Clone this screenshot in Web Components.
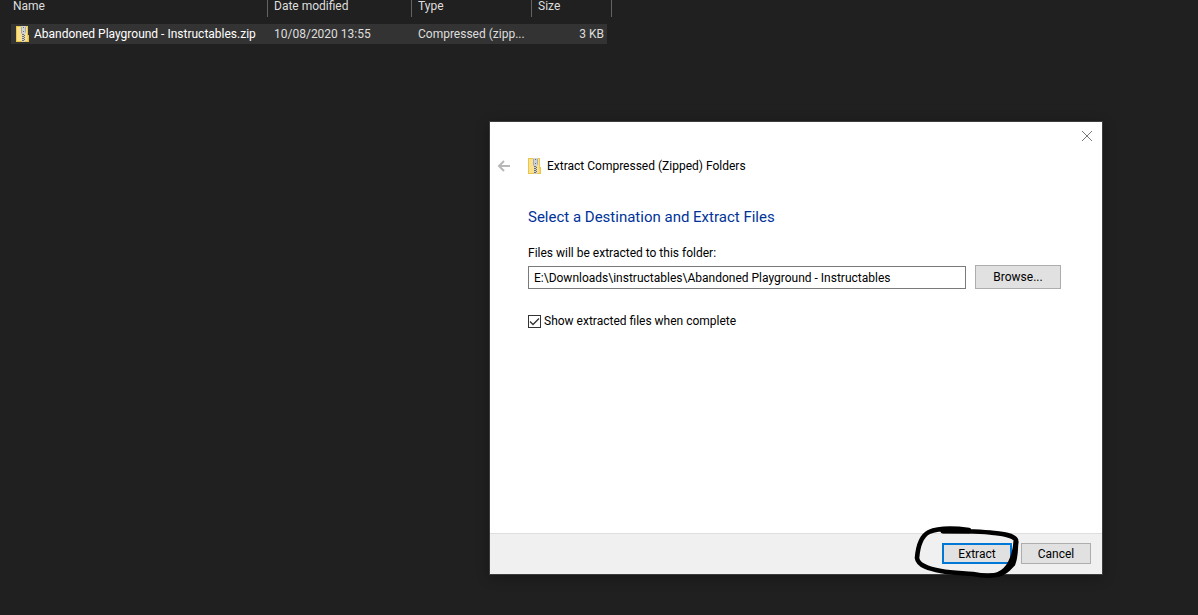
<!DOCTYPE html>
<html lang="en">
<head>
<meta charset="utf-8">
<title>Extract Compressed (Zipped) Folders</title>
<style>
html, body { height: 100%; margin: 0; }
body { background: #202020; color: #fff; font: 12px/16px Roboto, "Noto Sans", sans-serif; overflow: hidden; }
</style>
</head>
<body>
<desktop-area>
  <file-list></file-list>
  <extract-dialog slot="window"></extract-dialog>
</desktop-area>

<template id="zip-icon">
  <style>
    :host { display: block; flex: none; width: 13px; height: 16px; }
    svg { display: block; }
  </style>
  <svg width="13" height="16" viewBox="0 0 13 16" aria-hidden="true">
    <path d="M0 0h12v9h1v7H0z" fill="#e9c548"/>
    <path d="M1 1h10v14H1z" fill="#fbe18d"/>
    <path d="M11 10h1v5h-1z" fill="#f6d365"/>
    <path d="M5 0h5v7l-1 1v8H6V8L5 7z" fill="#d0d3d6"/>
    <path d="M5 1v6l1 1V1zM9 1v6l1-1V1z" fill="#a3a9ae"/>
    <path d="M7 1h1v1H7zM7 5h1v1H7zM6 8h2v1H6zM8 9h1v1H8zM6 10h2v1H6zM8 11h1v1H8zM6 12h2v1H6zM8 13h1v1H8zM6 14h2v1H6z" fill="#6a6e72"/>
  </svg>
</template>

<template id="desktop-area">
  <style>
    :host { display: block; position: relative; min-height: 100%; padding: 0 11px; box-sizing: border-box; }
    ::slotted([slot="window"]) { position: absolute; top: 121px; right: 95px; }
  </style>
  <slot></slot>
  <slot name="window"></slot>
</template>

<template id="file-list">
  <style>
    :host { display: block; }
    table { width: 601px; border-collapse: separate; border-spacing: 0; table-layout: fixed; }
    th, td { padding: 0 6px; text-align: left; white-space: nowrap; box-sizing: border-box; }
    th { height: 17px; padding-bottom: 5px; line-height: 12px; font-weight: 400; color: #dedede; border-right: 1px solid #636363; }
    th:first-child { padding-left: 2px; }
    .gap td { height: 7px; }
    .file td { height: 20px; background: #333; color: #dedede; }
    .file td:first-child { padding-left: 5px; color: #fff; }
    .file td:last-child { text-align: right; padding-right: 3px; border-right: 5px solid #202020; }
    .name { display: flex; align-items: center; gap: 5px; }
    .c1 { width: 257px; } .c2 { width: 144px; } .c3 { width: 120px; } .c4 { width: 80px; }
  </style>
  <table>
    <colgroup><col class="c1"><col class="c2"><col class="c3"><col class="c4"></colgroup>
    <thead><tr><th>Name</th><th>Date modified</th><th>Type</th><th>Size</th></tr></thead>
    <tbody>
      <tr class="gap"><td colspan="4"></td></tr>
      <tr class="file">
        <td><span class="name"><zip-icon></zip-icon>Abandoned Playground - Instructables.zip</span></td>
        <td>10/08/2020 13:55</td><td>Compressed (zipp...</td><td>3 KB</td>
      </tr>
    </tbody>
  </table>
</template>

<template id="push-button">
  <style>
    :host { display: block; flex: none; width: 70px; height: 21px; }
    :host([wide]) { width: 86px; height: 24px; }
    button { width: 100%; height: 100%; padding: 0; box-sizing: border-box; border: 1px solid #adadad; background: #e1e1e1; color: #000; font: inherit; line-height: 16px; }
    :host([primary]) button { border: 2px solid #0078d7; }
  </style>
  <button type="button"><slot></slot></button>
</template>

<template id="pen-ring">
  <style>
    :host { display: block; pointer-events: none; }
    svg { display: block; overflow: visible; }
  </style>
  <svg width="106" height="54" viewBox="0 0 106 54" fill="none" stroke="#000" stroke-linecap="round" stroke-linejoin="round" aria-hidden="true">
    <path d="M54 4C38 2 23 2 14 6C6 10 3 20 2 32C3 40 15 43 26 45C37 47 47 47 58 48C68 50 78 50 85 48C92 46 94 42 98 38C101 31 101 23 101 14C98 9 88 8 79 7C64 5 45 5 28 5" stroke-width="4.600"/>
    <path d="M28 5H54M84 48C93 44 99 34 101 16" stroke-width="5"/>
  </svg>
</template>

<template id="extract-dialog">
  <style>
    :host { display: flex; flex-direction: column; width: 614px; min-height: 454px; box-sizing: border-box; border: 1px solid #3d3d3d; background: #fff; color: #000; box-shadow: 0 3px 12px rgba(0,0,0,.3); }
    header { display: flex; justify-content: flex-end; height: 28px; }
    .plain { display: flex; align-items: center; justify-content: center; border: 0; padding: 0; background: none; }
    .close { width: 30px; height: 28px; }
    nav { display: flex; align-items: center; height: 32px; padding-left: 7px; }
    .back { width: 14px; height: 16px; margin-right: 17px; }
    .title { margin-left: 6px; line-height: 18px; }
    main { flex: 1; padding: 23px 41px 0 38px; }
    h1 { margin: 0 0 16px; font-size: 15px; line-height: 24px; font-weight: 400; color: #003399; }
    .caption { display: block; margin-bottom: 4px; }
    .row { display: flex; align-items: flex-end; gap: 9px; margin-bottom: 24px; }
    .path { flex: 1; min-width: 0; height: 23px; box-sizing: border-box; border: 1px solid #7a7a7a; padding: 0 5px; background: #fff; color: #000; font: inherit; border-radius: 0; }
    .check { display: flex; align-items: center; gap: 3px; }
    .check input { appearance: none; flex: none; width: 13px; height: 13px; margin: 0; box-sizing: border-box; border: 1px solid #333; background: #fff; }
    .check input:checked { background: #fff url("data:image/svg+xml,%3Csvg xmlns='http://www.w3.org/2000/svg' viewBox='0 0 11 11'%3E%3Cpath d='M1 5.5L4 8.5L10 2.500' fill='none' stroke='%23333' stroke-width='1.300'/%3E%3C/svg%3E") center / 11px 11px; }
    footer { display: flex; justify-content: flex-end; gap: 9px; padding: 9px 11px 10px; border-top: 1px solid #dfdfdf; background: #f0f0f0; }
    .marked { position: relative; }
    pen-ring { position: absolute; left: -27px; top: -17px; }
  </style>
  <header>
    <button class="plain close" type="button" aria-label="Close"><svg width="12" height="12" viewBox="0 0 12 12"><path d="M1 1l10 10M11 1L1 11" stroke="#777" fill="none"/></svg></button>
  </header>
  <nav>
    <button class="plain back" type="button" aria-label="Back"><svg width="14" height="12" viewBox="0 0 14 12"><path d="M13 6H2M7 1L2 6l5 5" stroke="#b8b8b8" stroke-width="2" fill="none"/></svg></button>
    <zip-icon></zip-icon><span class="title">Extract Compressed (Zipped) Folders</span>
  </nav>
  <main>
    <h1>Select a Destination and Extract Files</h1>
    <label class="caption" for="path">Files will be extracted to this folder:</label>
    <div class="row">
      <input class="path" id="path" type="text" value="E:\Downloads\instructables\Abandoned Playground - Instructables">
      <push-button wide>Browse...</push-button>
    </div>
    <label class="check"><input type="checkbox" checked>Show extracted files when complete</label>
  </main>
  <footer>
    <div class="marked"><push-button primary>Extract</push-button><pen-ring></pen-ring></div>
    <push-button>Cancel</push-button>
  </footer>
</template>

<script>
function define(name) {
  customElements.define(name, class extends HTMLElement {
    constructor() {
      super();
      this.attachShadow({ mode: "open" }).append(document.getElementById(name).content.cloneNode(true));
    }
  });
}
["zip-icon", "push-button", "pen-ring", "file-list", "extract-dialog", "desktop-area"].forEach(define);
</script>
</body>
</html>
